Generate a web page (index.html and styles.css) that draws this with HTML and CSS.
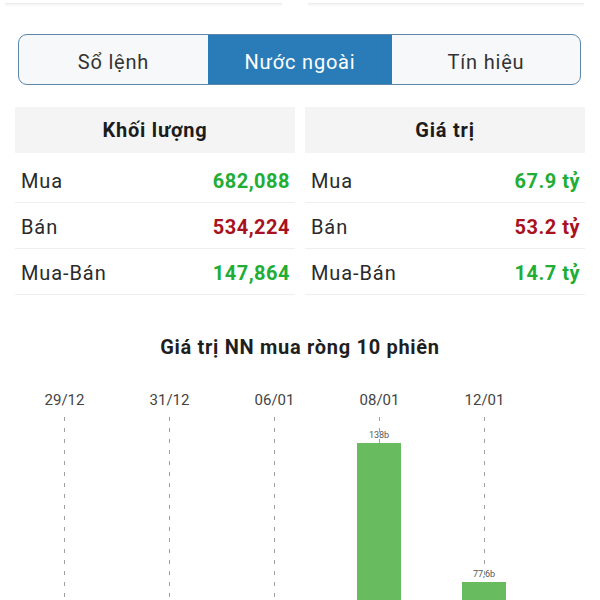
FILE: index.html
```html
<!DOCTYPE html>
<html lang="vi">
<head>
	<meta charset="UTF-8">
	<meta name="viewport" content="width=device-width, initial-scale=1.0">
	<title>Nước ngoài</title>
	<link rel="stylesheet" href="styles.css">
</head>
<body>
	<div class="top-cards"> <!-- phần dưới của hai thẻ phía trên -->
		<div class="top-card"></div>
		<div class="top-card"></div>
	</div>

	<div class="tabs">
		<div class="tab">Sổ lệnh</div>
		<div class="tab active">Nước ngoài</div>
		<div class="tab">Tín hiệu</div>
	</div>

	<div class="stats">
		<div class="stat-table">
			<div class="stat-head">Khối lượng</div>
			<div class="stat-row"><span>Mua</span><b class="up">682,088</b></div>
			<div class="stat-row"><span>Bán</span><b class="down">534,224</b></div>
			<div class="stat-row"><span>Mua-Bán</span><b class="up">147,864</b></div>
		</div>
		<div class="stat-table">
			<div class="stat-head">Giá trị</div>
			<div class="stat-row"><span>Mua</span><b class="up">67.9 tỷ</b></div>
			<div class="stat-row"><span>Bán</span><b class="down">53.2 tỷ</b></div>
			<div class="stat-row"><span>Mua-Bán</span><b class="up">14.7 tỷ</b></div>
		</div>
	</div>

	<h2 class="chart-title">Giá trị NN mua ròng 10 phiên</h2>

	<div class="chart">
		<div class="col">
			<div class="col-label">29/12</div>
			<div class="plot"><div class="grid-line"></div></div>
		</div>
		<div class="col">
			<div class="col-label">31/12</div>
			<div class="plot"><div class="grid-line"></div></div>
		</div>
		<div class="col">
			<div class="col-label">06/01</div>
			<div class="plot"><div class="grid-line"></div></div>
		</div>
		<div class="col">
			<div class="col-label">08/01</div>
			<div class="plot">
				<div class="grid-line"></div>
				<div class="bar" style="height: 174px"><span class="bar-value">138b</span></div>
			</div>
		</div>
		<div class="col">
			<div class="col-label">12/01</div>
			<div class="plot">
				<div class="grid-line"></div>
				<div class="bar" style="height: 35px"><span class="bar-value">77,6b</span></div>
			</div>
		</div>
	</div>
</body>
</html>
```

FILE: styles.css
```css
body {
    margin: 0;
    padding: 0;
    background-color: #fff;
    font-family: Roboto, "Noto Sans", Arial, sans-serif;
    color: #222;
    overflow: hidden;
}
.top-cards { /* viền dưới hai thẻ bị cắt */
    display: flex;
    gap: 26px;
    padding: 0 16px 0 5px;
}
.top-card {
    flex: 1;
    height: 3px;
    border-bottom: 1px solid #ececec;
    box-shadow: 0 2px 2px rgba(0, 0, 0, 0.04);
}
.tabs {
    display: grid;
    grid-template-columns: 189px 184px 1fr;
    height: 49px;
    margin: 30px 19px 0 18px;
    border: 1.5px solid #5d86a8;
    border-radius: 9px;
    overflow: hidden;
    background-color: #f7f8fa;
}
.tab {
    display: flex;
    align-items: center;
    justify-content: center;
    padding-top: 5px;
    font-size: 20px;
    letter-spacing: 0.8px;
    color: #333;
}
.tab.active {
    background-color: #2a7cb8;
    color: #fff;
}
.stats {
    display: grid;
    grid-template-columns: 1fr 1fr;
    gap: 10px;
    padding: 0 15px;
    margin-top: 22px;
}
.stat-head {
    height: 46px;
    line-height: 46px;
    margin-bottom: 4px;
    background-color: #f4f4f4;
    text-align: center;
    font-size: 20px;
    letter-spacing: 0.8px;
    font-weight: bold;
    color: #1c1c1c;
}
.stat-row {
    display: flex;
    align-items: center;
    justify-content: space-between;
    box-sizing: border-box;
    height: 46px;
    padding: 3px 5px 0 6px;
    border-bottom: 1px solid #efefef;
    font-size: 20px;
    letter-spacing: 0.9px;
    color: #2a2a2a;
}
.stat-row b {
    font-weight: bold;
    letter-spacing: 0.5px;
}
.up {
    color: #22ad35;
}
.down {
    color: #a8121e;
}
.chart-title {
    margin: 40px 0 0;
    line-height: 24px;
    text-align: center;
    font-size: 20px;
    letter-spacing: 0.7px;
    font-weight: bold;
    color: #1f1f1f;
}
.chart {
    display: flex;
    padding-left: 12px;
    margin-top: 31px;
}
.col {
    width: 105px;
    display: flex;
    flex-direction: column;
    align-items: center;
}
.col-label {
    line-height: 20px;
    font-size: 15px;
    color: #444;
}
.plot {
    position: relative;
    width: 100%;
    height: 200px;
    margin-top: 7px;
}
.grid-line { /* đường kẻ đứt */
    position: absolute;
    left: 52px;
    top: 0;
    bottom: 0;
    width: 1px;
    background: repeating-linear-gradient(to bottom, #a0a0a0 0 4px, transparent 4px 11px);
}
.bar {
    position: absolute;
    bottom: 0;
    left: 30px;
    width: 44px;
    background-color: #68bb5f;
}
.bar-value {
    position: absolute;
    bottom: 100%;
    left: 0;
    right: 0;
    margin-bottom: 3px;
    text-align: center;
    font-size: 9px;
    color: #555;
}
```
